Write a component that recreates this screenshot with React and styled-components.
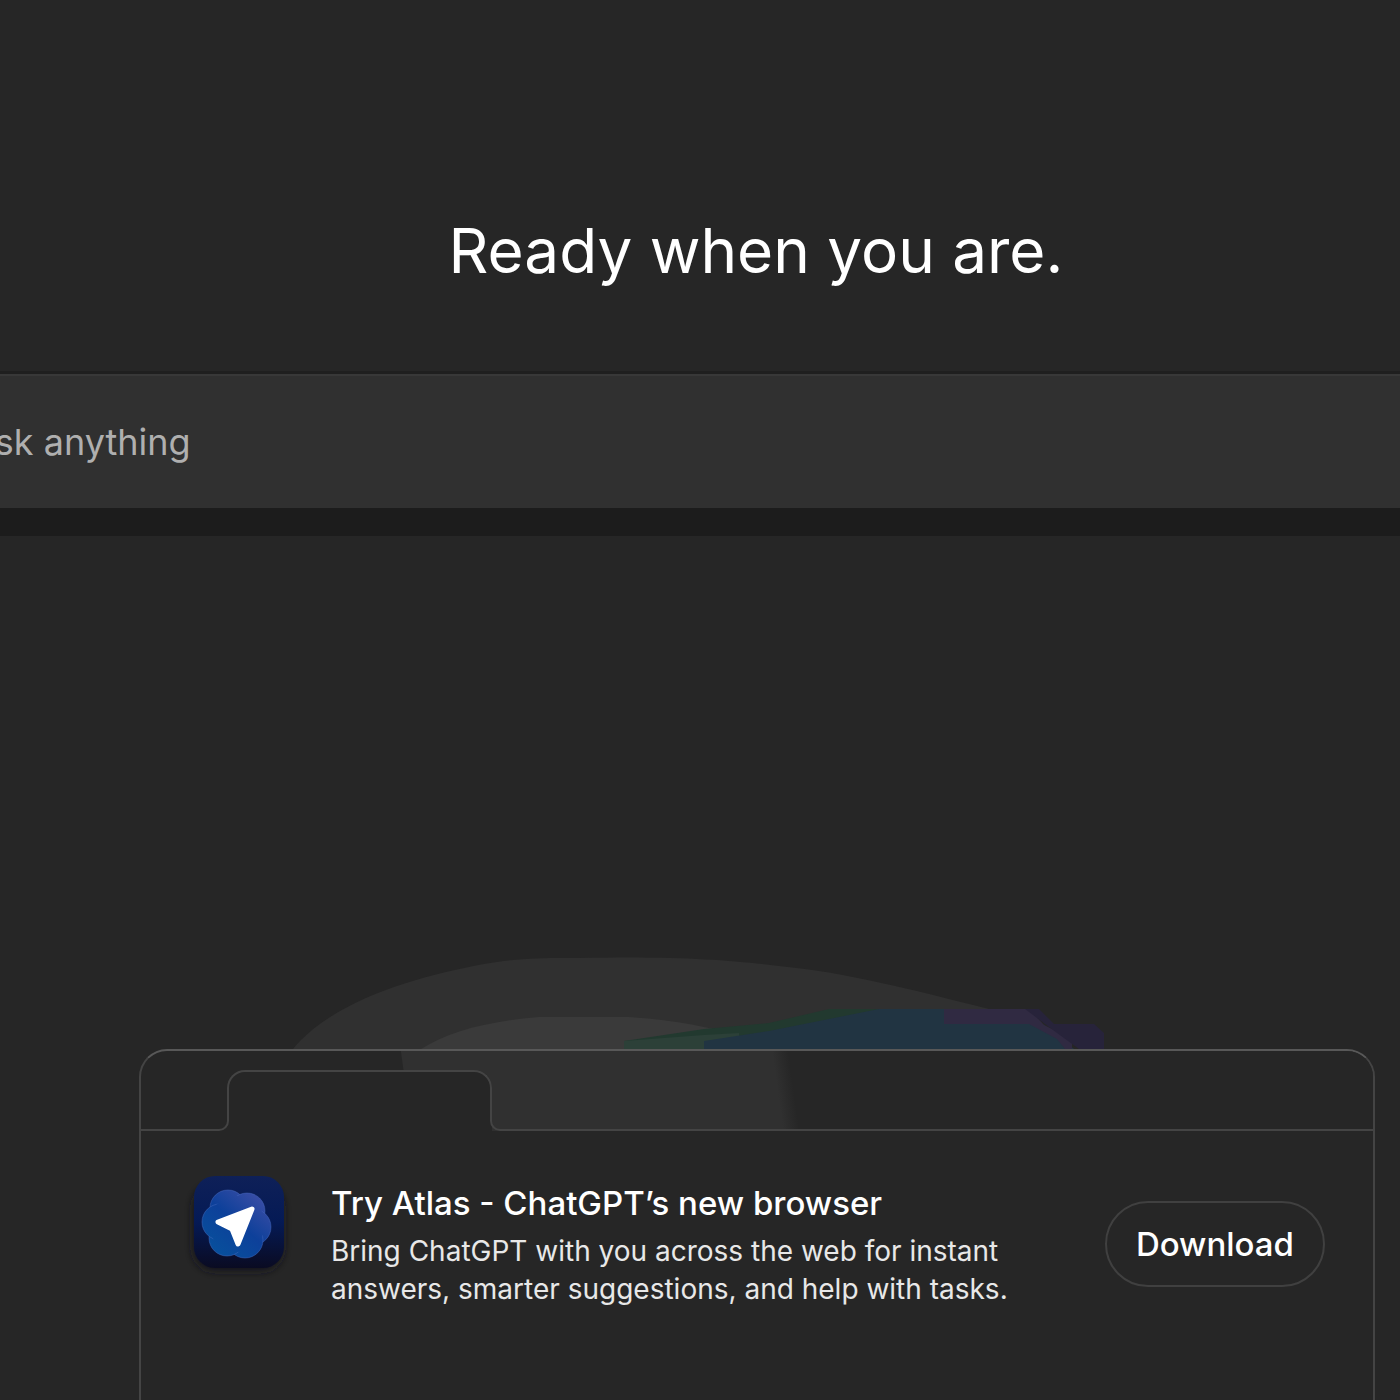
import React from 'react'
import styled, { createGlobalStyle } from 'styled-components'

const GlobalStyle = createGlobalStyle`
  * {
    box-sizing: border-box;
  }
  body {
    margin: 0;
    background-color: #262626;
    color: #ffffff;
    font-family: Inter, "Liberation Sans", sans-serif;
  }
`

const Page = styled.main`
  display: flex;
  flex-direction: column;
  min-height: 100vh;
  overflow: hidden;
`

const Heading = styled.h1`
  margin: 0;
  padding: 211px 0 83px 112px;
  font-size: 62px;
  font-weight: 400;
  line-height: 80px;
  text-align: center;
`

/* wider than the window, so the rounded ends stay out of view */
const Composer = styled.form`
  display: flex;
  align-items: center;
  height: 134px;
  margin: 0 -128px;
  padding: 0 98px;
  background-color: #303030;
  border-top: 2px solid #383838;
  border-radius: 67px;
  box-shadow: 0 -3px 0 #1f1f1f, 0 28px 0 #1c1c1c;
`

const ComposerInput = styled.input`
  flex: 1;
  min-width: 0;
  padding: 0;
  border: none;
  outline: none;
  background: none;
  color: #ffffff;
  font-family: inherit;
  font-size: 36px;
  line-height: 48px;
  &::placeholder {
    color: #afafaf;
    opacity: 1;
  }
`

const Promo = styled.section`
  position: relative;
  display: flex;
  flex: 1;
  margin: 541px 25px 0 139px;
`

const GlowArt = styled.svg`
  position: absolute;
  left: 150px;
  bottom: 100%;
`

const Browser = styled.div`
  flex: 1;
  min-height: 351px;
  background-color: #262626;
  border: 2px solid #444444;
  border-top-color: #585858;
  border-bottom: none;
  border-radius: 28px 28px 0 0;
  overflow: hidden;
`

const TabStrip = styled.div`
  display: flex;
  align-items: flex-end;
  height: 80px;
  background: linear-gradient(
    82deg,
    transparent 268px,
    #303030 269px,
    #303030 636px,
    #262626 652px
  );
`

const StripLeft = styled.div`
  position: relative;
  width: 88px;
  height: 12px;
  border: solid #444444;
  border-width: 0 2px 2px 0;
  border-bottom-right-radius: 10px;
`

const Tab = styled.div`
  display: flex;
  width: 265px;
  height: 61px;
  margin: 0 -2px;
  padding-bottom: 10px;
  background-color: #262626;
  border-radius: 18px 18px 0 0;
`

const TabOutline = styled.div`
  flex: 1;
  border: solid #444444;
  border-width: 2px 2px 0;
  border-radius: 18px 18px 0 0;
`

const StripRight = styled.div`
  position: relative;
  flex: 1;
  height: 12px;
  border: solid #444444;
  border-width: 0 0 2px 2px;
  border-bottom-left-radius: 10px;
`

const PromoRow = styled.div`
  display: flex;
  align-items: flex-start;
  padding: 34px 48px 0 42px;
`

const AppIcon = styled.svg`
  flex: none;
  margin-right: 36px;
`

const PromoText = styled.div`
  flex: 1;
  min-width: 0;
  padding-top: 17px;
`

const PromoTitle = styled.h2`
  margin: 0;
  font-size: 33px;
  font-weight: 500;
  line-height: 42px;
`

const PromoDescription = styled.p`
  max-width: 730px;
  margin: 8px 0 0;
  color: #e8e8e8;
  font-size: 28px;
  line-height: 38px;
`

const DownloadButton = styled.button`
  flex: none;
  height: 86px;
  margin-top: 36px;
  padding: 0 29px;
  background: none;
  border: 2px solid #404040;
  border-radius: 43px;
  color: #ffffff;
  font-family: inherit;
  font-size: 33px;
  font-weight: 500;
  cursor: pointer;
`

function Glow() {
  return (
    <GlowArt width="830" height="100" viewBox="0 0 830 100" aria-hidden="true">
      <path d="M4 100C30 68 85 37 180 18C225 8 260 9 290 9C390 7 440 11 490 17C560 24 620 40 700 60L760 100Z" fill="#303030" />
      <path d="M132 100C160 82 200 72 250 68H340C370 70 420 76 450 88V100Z" fill="#3a3a3a" />
      <path d="M335 100V92L415 80L480 74L540 60H610V100Z" fill="#22392f" />
      <path d="M335 100V92L415 86L450 84V92H415V100Z" fill="#2c4038" />
      <path d="M415 100V92L480 82L590 60H700L755 76L785 100Z" fill="#213442" />
      <path d="M655 60H740L755 76L783 90V100H776L768 90L740 75H655Z" fill="#302a42" />
      <path d="M736 60H750L765 75H805L815 84V100H790L768 84Z" fill="#27233a" />
    </GlowArt>
  )
}

function AtlasIcon() {
  return (
    <AppIcon width="112" height="120" viewBox="0 0 112 120" aria-hidden="true">
      <defs>
        <linearGradient id="tile" x1="0" y1="0" x2="0" y2="1">
          <stop offset="0" stopColor="#0e2058" />
          <stop offset="0.5" stopColor="#051a55" />
          <stop offset="1" stopColor="#0a0b22" />
        </linearGradient>
        <linearGradient id="flower" gradientUnits="userSpaceOnUse" x1="82" y1="32" x2="34" y2="90">
          <stop offset="0" stopColor="#3d4ea6" />
          <stop offset="0.5" stopColor="#0d409a" />
          <stop offset="1" stopColor="#07509c" />
        </linearGradient>
        <filter id="soft" x="-20%" y="-20%" width="140%" height="140%">
          <feGaussianBlur stdDeviation="4" />
        </filter>
      </defs>
      <rect x="10" y="20" width="90" height="86" rx="22" fill="#14141c" filter="url(#soft)" />
      <rect x="11" y="11" width="90" height="92" rx="21" fill="url(#tile)" />
      <g fill="url(#flower)" stroke="#4a6cc0" strokeOpacity="0.45" strokeWidth="1">
        <circle cx="45" cy="43" r="18" />
        <circle cx="64" cy="46" r="18" />
        <circle cx="70" cy="62" r="18" />
        <circle cx="62" cy="75" r="18" />
        <circle cx="44" cy="73" r="18" />
        <circle cx="37" cy="57" r="18" />
      </g>
      <circle cx="54" cy="59" r="28" fill="url(#flower)" />
      <path
        d="M69 44L35 57L49 64L55 79Z"
        fill="#ffffff"
        stroke="#ffffff"
        strokeWidth="5"
        strokeLinejoin="round"
      />
    </AppIcon>
  )
}

function App() {
  return (
    <Page>
      <GlobalStyle />
      <Heading>Ready when you are.</Heading>
      <Composer onSubmit={(e) => e.preventDefault()}>
        <ComposerInput type="text" placeholder="Ask anything" aria-label="Ask anything" />
      </Composer>
      <Promo>
        <Glow />
        <Browser>
          <TabStrip>
            <StripLeft />
            <Tab>
              <TabOutline />
            </Tab>
            <StripRight />
          </TabStrip>
          <PromoRow>
            <AtlasIcon />
            <PromoText>
              <PromoTitle>Try Atlas - ChatGPT’s new browser</PromoTitle>
              <PromoDescription>
                Bring ChatGPT with you across the web for instant answers, smarter suggestions, and help with tasks.
              </PromoDescription>
            </PromoText>
            <DownloadButton type="button">Download</DownloadButton>
          </PromoRow>
        </Browser>
      </Promo>
    </Page>
  )
}

export default App
